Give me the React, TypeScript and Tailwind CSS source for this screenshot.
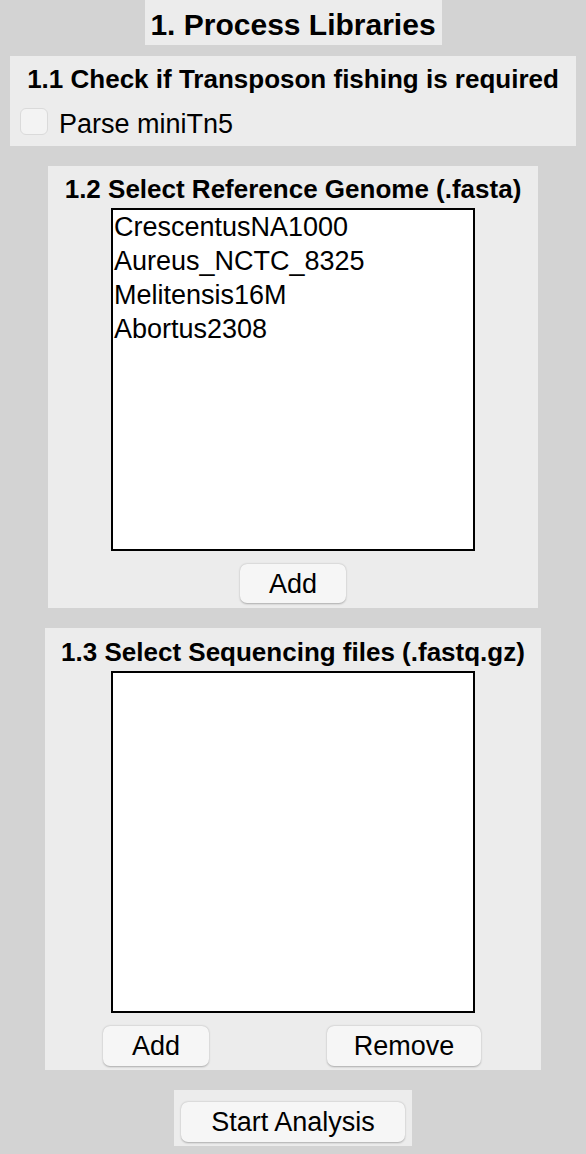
const genomes = ['CrescentusNA1000', 'Aureus_NCTC_8325', 'Melitensis16M', 'Abortus2308']

function MacButton({ label, className }: { label: string; className: string }) {
  return (
    <button
      type="button"
      className={
        'flex items-center justify-center rounded-[7px] bg-[#f6f6f6] text-[27px] leading-[30px] text-black shadow-[0_0.5px_2px_rgba(0,0,0,0.28)] ' +
        className
      }
    >
      {label}
    </button>
  )
}

function ListBox({ items, height }: { items: string[]; height: string }) {
  return (
    <div className={'w-[364px] border-2 border-black bg-white pl-px ' + height}>
      {items.map((item) => (
        <div key={item} className="text-[27px] leading-[34px] text-black">
          {item}
        </div>
      ))}
    </div>
  )
}

export default function App() {
  return (
    <div
      className="flex min-h-[1154px] w-full flex-col items-center bg-[#d3d3d3]"
      style={{ fontFamily: '"Liberation Sans", Arial, sans-serif' }}
    >
      <div className="flex h-[45px] w-[297px] justify-center bg-[#ececec] pt-[8px]">
        <h1 className="text-[30px] font-bold leading-[34px] text-black">1. Process Libraries</h1>
      </div>

      <section className="mt-[11px] h-[90px] w-[566px] bg-[#ececec] pt-[8px]">
        <h2 className="text-center text-[26px] font-bold leading-[30px] text-black">
          1.1 Check if Transposon fishing is required
        </h2>
        <label className="mt-[14px] flex items-start pl-[10px]">
          <span className="h-[27px] w-[28px] rounded-[6px] border border-[#dadada] bg-[#f3f3f3]" />
          <span className="ml-[11px] mt-[1px] text-[27px] leading-[30px] text-black">Parse miniTn5</span>
        </label>
      </section>

      <section className="mt-[20px] flex h-[442px] w-[490px] flex-col items-center bg-[#ececec] pt-[8px]">
        <h2 className="text-[26px] font-bold leading-[30px] text-black">1.2 Select Reference Genome (.fasta)</h2>
        <div className="mt-[4px]">
          <ListBox items={genomes} height="h-[343px]" />
        </div>
        <MacButton label="Add" className="mt-[13px] h-[39px] w-[106px]" />
      </section>

      <section className="mt-[20px] flex h-[442px] w-[496px] flex-col items-center bg-[#ececec] pt-[9px]">
        <h2 className="text-[26px] font-bold leading-[30px] text-black">1.3 Select Sequencing files (.fastq.gz)</h2>
        <div className="mt-[4px]">
          <ListBox items={[]} height="h-[342px]" />
        </div>
        <div className="mt-[13px] flex w-full justify-between pl-[58px] pr-[60px]">
          <MacButton label="Add" className="h-[40px] w-[106px]" />
          <MacButton label="Remove" className="h-[40px] w-[154px]" />
        </div>
      </section>

      <div className="mt-[20px] flex h-[56px] w-[238px] justify-center bg-[#ececec] pt-[12px]">
        <MacButton label="Start Analysis" className="h-[40px] w-[224px]" />
      </div>
    </div>
  )
}
